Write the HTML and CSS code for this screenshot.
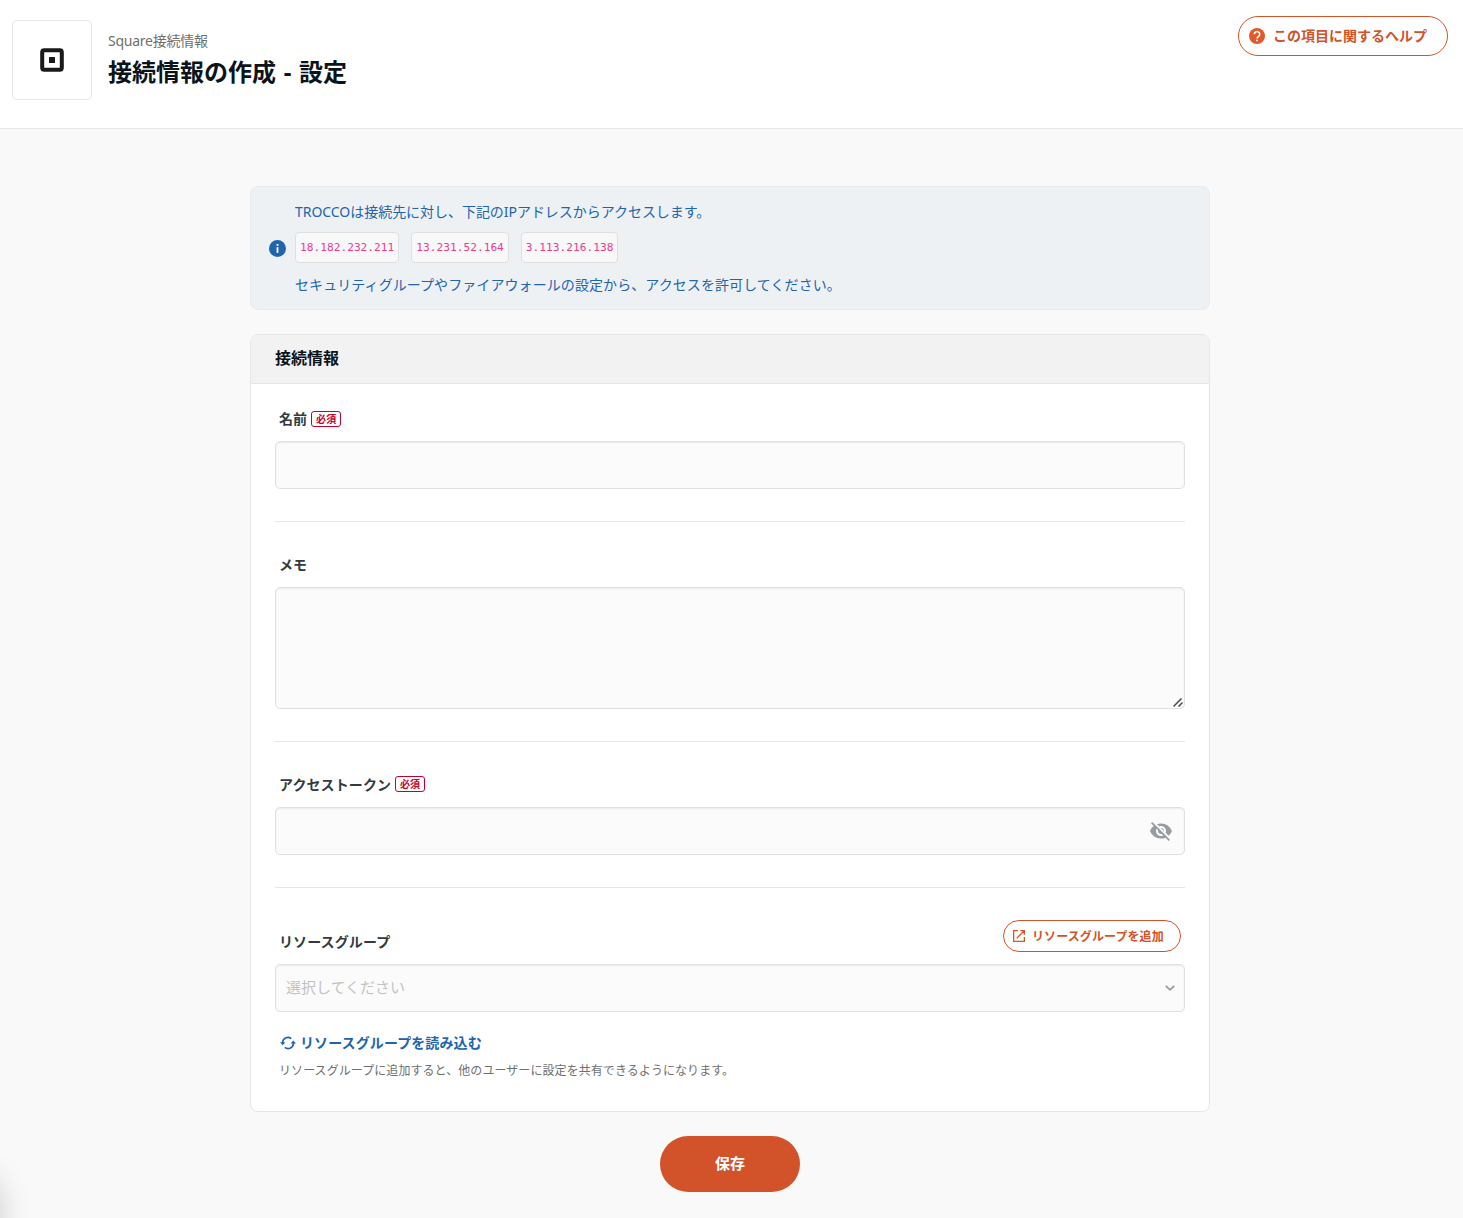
FILE: index.html
```html
<!DOCTYPE html>
<html lang="ja">
<head>
    <meta charset="UTF-8">
    <meta name="viewport" content="width=device-width, initial-scale=1.0">
    <title>接続情報の作成 - 設定</title>
    <link rel="stylesheet" href="styles.css">
</head>
<body>
    <header class="page-header">
        <div class="logo-box">
            <svg width="24" height="24" viewBox="0 0 24 24">
                <rect x="2.200" y="2.200" width="19.600" height="19.600" rx="2" fill="none" stroke="#1a1a1a" stroke-width="4"/>
                <rect x="9" y="9" width="6" height="6" rx="0.5" fill="#1a1a1a"/>
            </svg>
        </div>
        <div class="titles">
            <p class="sub-title">Square接続情報</p>
            <h1 class="main-title">接続情報の作成 - 設定</h1>
        </div>
        <button class="btn-outline help-btn">
            <svg width="16" height="16" viewBox="0 0 16 16">
                <circle cx="8" cy="8" r="8" fill="#e05a2b"/>
                <path d="M5.300 6.300a2.700 2.700 0 1 1 4.300 2.100C8.500 9.200 8 9.500 8 10.600" fill="none" stroke="#fff" stroke-width="1.600"/>
                <rect x="7.200" y="11.700" width="1.600" height="1.600" fill="#fff"/>
            </svg>
            <span>この項目に関するヘルプ</span>
        </button>
    </header>

    <main class="container">
        <div class="alert">
            <svg class="alert-icon" width="17" height="17" viewBox="0 0 17 17">
                <circle cx="8.5" cy="8.5" r="8.500" fill="#2264ac"/>
                <rect x="7.600" y="4" width="1.800" height="1.800" fill="#fff"/>
                <rect x="7.600" y="7.200" width="1.800" height="5.600" fill="#fff"/>
            </svg>
            <div class="alert-body">
                <p class="alert-lead">TROCCOは接続先に対し、下記のIPアドレスからアクセスします。</p>
                <div class="ip-list">
                    <code>18.182.232.211</code>
                    <code>13.231.52.164</code>
                    <code>3.113.216.138</code>
                </div>
                <p class="alert-text">セキュリティグループやファイアウォールの設定から、アクセスを許可してください。</p>
            </div>
        </div>

        <form class="card">
            <h2 class="card-header">接続情報</h2>
            <div class="card-body">
                <div class="field">
                    <label class="label" for="name">名前<span class="required">必須</span></label>
                    <input class="input" type="text" id="name">
                </div>
                <div class="field">
                    <label class="label" for="memo">メモ</label>
                    <div class="memo-box">
                        <textarea class="input memo" id="memo"></textarea>
                        <svg class="grip" width="10" height="9" viewBox="0 0 10 9" fill="none" stroke="#4a4a4a" stroke-width="1.500">
                            <path d="M.5 8.500L8.500.5M5.500 8.500L9.500 4.500"/>
                        </svg>
                    </div>
                </div>
                <div class="field">
                    <label class="label token-label" for="token">アクセストークン<span class="required">必須</span></label>
                    <div class="input token-box">
                        <input class="token" type="password" id="token">
                        <svg width="24" height="24" viewBox="0 0 24 24" fill="#959d9f">
                            <path d="M12 7c2.760 0 5 2.240 5 5 0 .65-.13 1.260-.36 1.830l2.920 2.920c1.510-1.260 2.700-2.890 3.430-4.750-1.730-4.390-6-7.500-11-7.500-1.400 0-2.740.25-3.980.7l2.160 2.160C10.740 7.130 11.350 7 12 7zM2 4.270l2.280 2.280.46.46C3.080 8.300 1.780 10.020 1 12c1.730 4.390 6 7.500 11 7.500 1.550 0 3.030-.3 4.380-.84l.42.42L19.730 22 21 20.730 3.270 3 2 4.270zM7.530 9.800l1.550 1.550c-.05.21-.08.43-.08.65 0 1.660 1.340 3 3 3 .22 0 .44-.03.65-.08l1.550 1.550c-.67.33-1.410.53-2.200.53-2.760 0-5-2.240-5-5 0-.79.2-1.530.53-2.200zm4.310-.78l3.150 3.150.02-.16c0-1.660-1.340-3-3-3l-.17.01z"/>
                        </svg>
                    </div>
                </div>
                <div class="field group-field">
                    <div class="label-row">
                        <span class="label">リソースグループ</span>
                        <button type="button" class="btn-outline add-btn">
                            <svg width="12" height="12" viewBox="0 0 12 12" fill="none" stroke="#d9572b" stroke-width="1.300">
                                <path d="M5 .65H.65v10.700h10.700V7M7.300.65h4.050V4.700M11.200.8L3.800 8.200"/>
                            </svg>
                            リソースグループを追加
                        </button>
                    </div>
                    <div class="input select">
                        <span>選択してください</span>
                        <svg width="10" height="6" viewBox="0 0 10 6" fill="none" stroke="#959d9f" stroke-width="1.800">
                            <path d="M.8.8L5 4.800 9.200.8"/>
                        </svg>
                    </div>
                    <a class="reload">
                        <svg width="16" height="14" viewBox="0 0 16 14" fill="none" stroke="#2264ac" stroke-width="1.700">
                            <path d="M2.600 7.500V7A5.300 5.300 0 0 1 11.200 2.700M13.400 6.500V7A5.300 5.300 0 0 1 4.800 11.300"/>
                            <path d="M0 6.200h5.400L2.700 9.200zM10.600 7.600H16L13.300 4.600z" fill="#2264ac" stroke="none"/>
                        </svg>
                        リソースグループを読み込む
                    </a>
                    <p class="note">リソースグループに追加すると、他のユーザーに設定を共有できるようになります。</p>
                </div>
            </div>
        </form>

        <button class="save-btn">保存</button>
    </main>
    <div class="side-shadow"></div>
</body>
</html>
```
FILE: styles.css
```css
* {
    box-sizing: border-box;
}

body {
    margin: 0;
    height: 1218px;
    overflow: hidden;
    background-color: #f9f9f9;
    color: #333b42;
    font-family: "Noto Sans", "Noto Sans CJK JP", sans-serif;
    font-size: 14px;
    line-height: 20px;
}

h1, h2, p {
    margin: 0;
}

svg {
    display: block;
    flex-shrink: 0;
}

button, input, textarea {
    font-family: inherit;
}

.page-header {
    display: flex;
    align-items: flex-start;
    height: 129px;
    padding: 16px 15px 0 12px;
    background-color: #fff;
    border-bottom: 1px solid #e6e6e6;
}

.logo-box {
    display: flex;
    align-items: center;
    justify-content: center;
    width: 80px;
    height: 80px;
    margin-top: 4px;
    border: 1px solid #e6e6e6;
    border-radius: 5px;
}

.titles {
    flex: 1;
    margin: 15px 0 0 16px;
}

.sub-title {
    color: #6f6f6f;
    letter-spacing: -0.25px;
}

.main-title {
    color: #0b141b;
    font-size: 24px;
    line-height: 42px;
    font-weight: 700;
    word-spacing: 1.4px;
}

.btn-outline {
    display: flex;
    align-items: center;
    background-color: #fff;
    border: 1px solid #d2532a;
    color: #d2532a;
    font-weight: 700;
    white-space: nowrap;
    cursor: pointer;
}

.help-btn {
    gap: 8px;
    width: 210px;
    height: 40px;
    padding: 0 0 0 10px;
    border-radius: 20px;
    font-size: 14px;
}

.help-btn span {
    padding-bottom: 2px;
}

.container {
    width: 960px;
    margin: 57px 0 0 250px;
}

.alert {
    display: flex;
    align-items: center;
    height: 124px;
    padding-left: 18px;
    background-color: #edf1f4;
    border: 1px solid #e4edf2;
    border-radius: 8px;
    color: #2264ac;
}

.alert-body {
    margin-left: 9px;
}

.alert-body p {
    line-height: 21px;
}

.alert-lead {
    letter-spacing: -0.04px;
}

.alert-text {
    letter-spacing: 0.08px;
}

.ip-list {
    display: flex;
    gap: 12px;
    margin: 10px 0 11px;
}

.ip-list code {
    height: 31px;
    padding: 0 4px;
    background-color: #f8f8f8;
    border: 1px solid #dfdfdf;
    border-radius: 4px;
    color: #e83e8c;
    font-family: "DejaVu Sans Mono", monospace;
    font-size: 11.2px;
    line-height: 29px;
}

.card {
    height: 778px;
    margin-top: 24px;
    background-color: #fff;
    border: 1px solid #e6e6e6;
    border-radius: 8px;
    overflow: hidden;
}

.card-header {
    height: 49px;
    padding-left: 24px;
    background-color: #f2f2f2;
    border-bottom: 1px solid #e6e6e6;
    color: #0b141b;
    font-size: 16px;
    line-height: 47px;
}

.card-body {
    padding: 0 24px;
}

.field {
    padding: 25px 0 32px;
    border-bottom: 1px solid #e6e6e6;
}

.field + .field {
    padding-top: 33px;
}

.label {
    display: flex;
    align-items: center;
    height: 20px;
    margin-bottom: 12px;
    padding-left: 4px;
    font-weight: 700;
    letter-spacing: 0.1px;
}

.required {
    width: 30px;
    height: 16px;
    margin-left: 4px;
    border: 1px solid #c4002f;
    border-radius: 3px;
    color: #c4002f;
    font-size: 10px;
    line-height: 14px;
    text-align: center;
}

.token-label .required {
    margin-bottom: 2px;
}

.input {
    display: block;
    width: 100%;
    height: 48px;
    background-color: #fbfbfb;
    border: 1px solid #e0e0e0;
    border-radius: 5px;
    box-shadow: inset 0 1px 2px rgba(0, 0, 0, 0.07);
}

.memo-box {
    position: relative;
}

.memo {
    height: 122px;
    resize: none;
}

.grip {
    position: absolute;
    right: 2px;
    bottom: 2px;
}

.token-box,
.select {
    display: flex;
    align-items: center;
    padding-right: 11px;
}

.token {
    flex: 1;
    height: 100%;
    border: none;
    background: none;
}

.field.group-field {
    padding: 32px 0 0;
    border: none;
}

.label-row {
    display: flex;
    justify-content: space-between;
    height: 44px;
    padding-right: 4px;
}

.label-row .label {
    margin-top: 12px;
}

.add-btn {
    gap: 7px;
    width: 178px;
    height: 32px;
    padding: 0 0 0 9px;
    border-radius: 16px;
    font-size: 12px;
    letter-spacing: 0.1px;
}

.select {
    justify-content: space-between;
    padding: 0 9px 0 10px;
    color: #c2c2c2;
    font-size: 15px;
}

.select span {
    padding-bottom: 2px;
}

.reload {
    display: flex;
    align-items: center;
    gap: 4px;
    margin: 21px 0 0 5px;
    color: #2264ac;
    font-weight: 700;
    letter-spacing: 0.1px;
}

.note {
    margin: 8px 0 0 4px;
    color: #6f6f6f;
    font-size: 12px;
    letter-spacing: 0.07px;
}

.save-btn {
    display: block;
    width: 140px;
    height: 56px;
    margin: 24px auto 0;
    padding: 0 0 4px;
    background-color: #d2532a;
    border: none;
    border-radius: 28px;
    color: #fff;
    font-size: 15px;
    font-weight: 700;
    cursor: pointer;
}

.side-shadow {
    position: fixed;
    left: -40px;
    bottom: -30px;
    width: 40px;
    height: 70px;
    border-radius: 20px;
    box-shadow: 0 0 32px rgba(0, 0, 0, 0.18);
}
```
